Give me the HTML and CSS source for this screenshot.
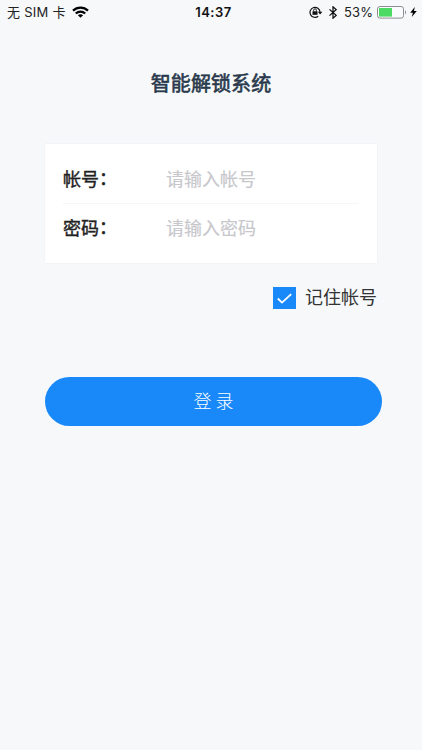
FILE: index.html
```html
<!DOCTYPE html>
<html lang="zh-CN">
<head>
<meta charset="utf-8">
<title>智能解锁系统</title>
<link rel="stylesheet" href="styles.css">
</head>
<body>
<header class="status">
  <div class="status-left">
    <span class="carrier">无 SIM 卡</span>
    <svg class="wifi" width="17" height="12" viewBox="0 0 17 12" fill="none" stroke="#000" stroke-width="2.3"><path d="M1 4.6C5.2.5 11.8.5 16 4.6"/><path d="M3.8 7.5c2.7-2.6 6.7-2.6 9.4 0"/><path d="M8.5 11.8 5.9 9.3c1.5-1.4 3.7-1.4 5.2 0z" fill="#000" stroke="none"/></svg>
  </div>
  <time class="clock">14:37</time>
  <div class="status-right">
    <svg class="lock" width="14" height="12" viewBox="0 0 14 12" fill="none" stroke="#111"><path d="M9.2 10.2A5 5 0 1 1 11 6" stroke-width="1.2"/><path d="M8.8 5.7h4.6L11.1 8.5z" fill="#111" stroke="none"/><path d="M3.5 5.3h5v3.5h-5z" fill="#111" stroke="none"/><path d="M4.6 5.5V4.2a1.4 1.4 0 0 1 2.8 0v1.3" stroke-width=".9"/></svg>
    <svg class="bluetooth" width="8" height="13" viewBox="0 0 8 13" fill="none" stroke="#111" stroke-width="1.25"><path d="M.5 3.4 7.1 9.4 4 12.2V.8l3.1 2.8L.5 9.6"/></svg>
    <span class="percent">53%</span>
    <svg class="battery" width="31" height="13" viewBox="0 0 31 13"><rect x=".5" y=".5" width="26" height="11.6" rx="2.4" fill="#fafbfc" stroke="#8b8d90"/><path d="M2 2h13v8.6H2z" fill="#4cd964"/><path d="M28 4.3c1.4.5 1.4 3.5 0 4z" fill="#8b8d90"/></svg>
    <svg class="bolt" width="7" height="10" viewBox="0 0 7 10"><path d="M4.8 0 .2 5.7h2.7L1.8 10l5-6H4z" fill="#000"/></svg>
  </div>
</header>
<main class="login">
  <h1 class="title">智能解锁系统</h1>
  <form class="form">
    <div class="card">
      <label class="field"><span class="label">帐号<span class="colon">：</span></span><input class="input" type="text" placeholder="请输入帐号"></label>
      <label class="field"><span class="label">密码<span class="colon">：</span></span><input class="input" type="password" placeholder="请输入密码"></label>
    </div>
    <div class="remember">
      <span class="checkbox"><svg width="23" height="22" viewBox="0 0 23 22" fill="none" stroke="#fff" stroke-width="1.8"><path d="m4.8 11.5 4.2 4.1 9.2-8.4"/></svg></span>
      <span class="remember-text">记住帐号</span>
    </div>
    <button class="submit" type="button">登 录</button>
  </form>
</main>
</body>
</html>
```
FILE: styles.css
```css
* { box-sizing: border-box; }
body {
  margin: 0;
  min-height: 750px;
  background: #f6f8fa;
  color: #222;
  font-family: Inter, "Noto Sans CJK SC", sans-serif;
}
.status {
  display: grid;
  grid-template-columns: 1fr auto 1fr;
  align-items: center;
  height: 24px;
  padding: 0 5px 0 7px;
  font-size: 13px;
  line-height: 24px;
}
.status-left, .status-right { display: flex; align-items: center; }
.status-left { gap: 6px; }
.status-right { justify-content: flex-end; }
.carrier { letter-spacing: .25px; }
.clock { padding-left: 3px; font-weight: 600; letter-spacing: .5px; color: #111; }
.bluetooth { margin: 0 7px 0 6px; }
.percent { margin-right: 4px; letter-spacing: .1px; }
.bolt { margin-left: 2px; }
.login { padding: 43px 40px 0 45px; font-family: "Noto Sans CJK SC", sans-serif; }
.title {
  width: 332px;
  margin: 0;
  color: #2a3a4c;
  font-size: 20px;
  font-weight: 400;
  line-height: 32px;
  text-align: center;
  letter-spacing: .1px;
  -webkit-text-stroke: .6px #2a3a4c;
}
.form { margin-top: 45px; }
.card {
  width: 332px;
  height: 119px;
  padding: 9px 18px;
  background: #fff;
  box-shadow: 0 0 1px #dfe2e5;
}
.field { display: flex; align-items: center; height: 50px; }
.field + .field { height: 49px; border-top: 1px solid #f5f6f7; }
.label {
  width: 103px;
  font-size: 18px;
  line-height: 30px;
  -webkit-text-stroke: .4px #222;
}
.colon { display: inline-block; transform: translateY(-1px); }
.input {
  flex: 1;
  min-width: 0;
  height: 30px;
  padding: 0;
  border: 0;
  outline: 0;
  background: transparent;
  font: 18px/30px "Noto Sans CJK SC", sans-serif;
}
.label, .input { margin-bottom: 2px; }
.field:first-child .label, .field:first-child .input { margin-bottom: 0; }
.input::placeholder { color: #c7c7cc; opacity: 1; -webkit-text-stroke: .15px #c7c7cc; }
.remember {
  display: flex;
  align-items: center;
  justify-content: flex-end;
  width: 332px;
  height: 30px;
  margin-top: 20px;
  gap: 9px;
}
.checkbox { width: 23px; height: 22px; background: #1989fa; }
.checkbox svg { display: block; }
.remember-text { margin-bottom: 4px; color: #333; font-size: 18px; line-height: 30px; }
.submit {
  display: block;
  width: 337px;
  height: 49px;
  margin-top: 64px;
  padding: 0 0 2px;
  border: 0;
  border-radius: 25px;
  background: #1989fa;
  color: #fff;
  font: 300 18px/45px "Noto Sans CJK SC", sans-serif;
}
```
